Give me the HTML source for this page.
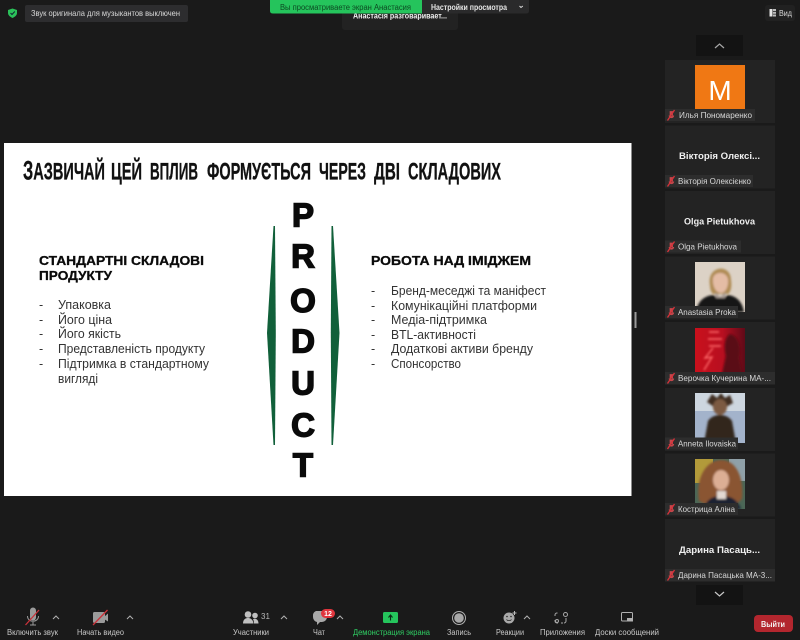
<!DOCTYPE html>
<html><head><meta charset="utf-8"><title>Zoom</title>
<style>
html,body{margin:0;padding:0;background:#1a1a1a;width:800px;height:640px;overflow:hidden}
svg{display:block;font-family:"Liberation Sans",sans-serif}
.l{font-size:8px;fill:#c8c8c8;text-anchor:start}
.n{font-size:8.500px;fill:#d8d8d8}
.b{font-size:9.500px;font-weight:bold;fill:#f0f0f0}
.li{font-size:12.500px;fill:#333}
.h{font-size:13px;font-weight:bold;fill:#0a0a0a;stroke:#0a0a0a;stroke-width:.3}
.p{font-size:33px;font-weight:bold;fill:#0a0a0a;stroke:#0a0a0a;stroke-width:1.500;text-anchor:middle}
.t{font-family:"Liberation Sans Narrow","Liberation Sans",sans-serif;font-size:24px;font-weight:bold;fill:#111;stroke:#111;stroke-width:.35}
.tile{fill:#232323}
.lab{fill:#2d2d2d}
</style></head><body>
<svg width="800" height="640" viewBox="0 0 800 640" xmlns="http://www.w3.org/2000/svg">
<defs>
<filter id="bl"><feGaussianBlur stdDeviation="1"/></filter>
<filter id="bl2"><feGaussianBlur stdDeviation="2.500"/></filter>
<linearGradient id="rd" x1="0" x2="1" y1="0" y2="0"><stop offset="0" stop-color="#c9101c"/><stop offset=".55" stop-color="#b80f20"/><stop offset="1" stop-color="#5f0a18"/></linearGradient>
<g id="mm"><path d="M3 1.500h2.600v5H3zM2 5.500c0 3 4.800 3 4.800 0" fill="#c4484c" stroke="#c4484c" stroke-width=".7"/><path d="M.5 10.500 L7.500 0" stroke="#d6323a" stroke-width="1.300"/></g>
</defs>
<rect width="800" height="640" fill="#1a1a1a"/>

<!-- top left -->
<path d="M12.500 8.500 L17 10 V13 C17 15.500 14.500 17 12.500 18 C10.500 17 8 15.500 8 13 V10Z" fill="#2bc15a"/>
<path d="M10.500 13 L12 14.500 L14.800 11.500" stroke="#123" stroke-width="1" fill="none"/>
<rect x="25" y="5" width="163" height="17" rx="2" fill="#2d2d2f"/>
<text x="31" y="16" class="n" textLength="149" lengthAdjust="spacingAndGlyphs">Звук оригинала для музыкантов выключен</text>

<!-- talking box -->
<rect x="342" y="8" width="116" height="22" rx="3" fill="#222"/>
<text x="353" y="18.500" class="b" style="font-size:8px" textLength="94" lengthAdjust="spacingAndGlyphs">Анастасія разговаривает...</text>

<!-- top banner -->
<path d="M270 0H422V13.500H273Q270 13.500 270 11Z" fill="#25c45c"/>
<text x="280" y="10" style="font-size:8px;fill:#0c4a22" textLength="131" lengthAdjust="spacingAndGlyphs">Вы просматриваете экран Анастасия</text>
<path d="M422 0H529V11Q529 13.500 526 13.500H422Z" fill="#2a2a2b"/>
<text x="431" y="10" style="font-size:8px;font-weight:bold;fill:#e6e6e6" textLength="76" lengthAdjust="spacingAndGlyphs">Настройки просмотра</text>
<path d="M519.500 6L521 7.500L522.800 6" stroke="#ddd" fill="none" stroke-width="1"/>

<!-- view -->
<rect x="765" y="5" width="30" height="16" rx="3" fill="#212121"/>
<rect x="769.500" y="9" width="3" height="7.500" fill="#e4e4e4"/><rect x="773" y="9" width="3" height="2" fill="#bbb"/><rect x="773" y="11.800" width="3" height="2" fill="#bbb"/><rect x="773" y="14.500" width="3" height="2" fill="#bbb"/>
<text x="779" y="16" class="n" textLength="13" lengthAdjust="spacingAndGlyphs">Вид</text>

<!-- slide -->
<rect x="4" y="143" width="627.500" height="353" fill="#fff"/>
<text x="23" y="179.500" class="t" textLength="82" lengthAdjust="spacingAndGlyphs"><tspan style="font-size:27px">З</tspan>АЗВИЧАЙ</text>
<text x="111" y="179.500" class="t" textLength="31" lengthAdjust="spacingAndGlyphs">ЦЕЙ</text>
<text x="150" y="179.500" class="t" textLength="48" lengthAdjust="spacingAndGlyphs">ВПЛИВ</text>
<text x="207" y="179.500" class="t" textLength="104" lengthAdjust="spacingAndGlyphs">ФОРМУЄТЬСЯ</text>
<text x="319" y="179.500" class="t" textLength="47" lengthAdjust="spacingAndGlyphs">ЧЕРЕЗ</text>
<text x="374" y="179.500" class="t" textLength="26" lengthAdjust="spacingAndGlyphs">ДВІ</text>
<text x="408" y="179.500" class="t" textLength="93" lengthAdjust="spacingAndGlyphs">СКЛАДОВИХ</text>

<text x="303" y="226.500" class="p">P</text>
<text x="303" y="267.500" class="p">R</text>
<text x="303" y="312" class="p">O</text>
<text x="303" y="352.500" class="p">D</text>
<text x="303" y="394.500" class="p">U</text>
<text x="303" y="436.500" class="p">C</text>
<text x="303" y="476.500" class="p">T</text>

<path d="M273.500 226H275L275.800 333L275 445H273.500L267 333Z" fill="#11603a"/>
<path d="M331.500 226H333L339.500 333L333 445H331.500L330.800 333Z" fill="#11603a"/>

<text x="39" y="265" class="h" textLength="165" lengthAdjust="spacingAndGlyphs">СТАНДАРТНІ СКЛАДОВІ</text>
<text x="39" y="280" class="h" textLength="73" lengthAdjust="spacingAndGlyphs">ПРОДУКТУ</text>
<text class="li" x="39" y="309">-</text><text class="li" x="58" y="309" textLength="53" lengthAdjust="spacingAndGlyphs">Упаковка</text>
<text class="li" x="39" y="324">-</text><text class="li" x="58" y="324" textLength="54" lengthAdjust="spacingAndGlyphs">Його ціна</text>
<text class="li" x="39" y="338">-</text><text class="li" x="58" y="338" textLength="63" lengthAdjust="spacingAndGlyphs">Його якість</text>
<text class="li" x="39" y="353">-</text><text class="li" x="58" y="353" textLength="147" lengthAdjust="spacingAndGlyphs">Представленість продукту</text>
<text class="li" x="39" y="368">-</text><text class="li" x="58" y="368" textLength="151" lengthAdjust="spacingAndGlyphs">Підтримка в стандартному</text>
<text class="li" x="58" y="383" textLength="40" lengthAdjust="spacingAndGlyphs">вигляді</text>

<text x="371" y="265" class="h" textLength="160" lengthAdjust="spacingAndGlyphs">РОБОТА НАД ІМІДЖЕМ</text>
<text class="li" x="371" y="295">-</text><text class="li" x="391" y="295" textLength="155" lengthAdjust="spacingAndGlyphs">Бренд-меседжі та маніфест</text>
<text class="li" x="371" y="310">-</text><text class="li" x="391" y="310" textLength="146" lengthAdjust="spacingAndGlyphs">Комунікаційні платформи</text>
<text class="li" x="371" y="324">-</text><text class="li" x="391" y="324" textLength="96" lengthAdjust="spacingAndGlyphs">Медіа-підтримка</text>
<text class="li" x="371" y="339">-</text><text class="li" x="391" y="339" textLength="85" lengthAdjust="spacingAndGlyphs">BTL-активності</text>
<text class="li" x="371" y="353">-</text><text class="li" x="391" y="353" textLength="142" lengthAdjust="spacingAndGlyphs">Додаткові активи бренду</text>
<text class="li" x="371" y="368">-</text><text class="li" x="391" y="368" textLength="70" lengthAdjust="spacingAndGlyphs">Спонсорство</text>

<!-- splitter -->
<rect x="634.500" y="312" width="2" height="16" fill="#9a9a9a"/>

<!-- side nav -->
<rect x="696" y="35" width="47" height="21" fill="#131313"/>
<path d="M715 48L719.500 44L724 48" stroke="#a8a8a8" fill="none" stroke-width="1.200"/>
<rect x="696" y="585" width="47" height="20" fill="#131313"/>
<path d="M715 592L719.500 596L724 592" stroke="#c8c8c8" fill="none" stroke-width="1.200"/>

<!-- tiles -->
<rect class="tile" x="665" y="60" width="110" height="63"/>
<rect class="tile" x="665" y="125.500" width="110" height="63"/>
<rect class="tile" x="665" y="191" width="110" height="63"/>
<rect class="tile" x="665" y="256.500" width="110" height="63"/>
<rect class="tile" x="665" y="322" width="110" height="63"/>
<rect class="tile" x="665" y="388" width="110" height="63"/>
<rect class="tile" x="665" y="453.500" width="110" height="63"/>
<rect class="tile" x="665" y="519" width="110" height="63"/>

<!-- avatar M -->
<rect x="695" y="65" width="50" height="47" fill="#f07814"/>
<text x="720" y="100" text-anchor="middle" style="font-size:28px;fill:#fff">M</text>

<text x="679" y="159" class="b" textLength="81" lengthAdjust="spacingAndGlyphs">Вікторія Олексі...</text>
<text x="684" y="224.500" class="b" textLength="71" lengthAdjust="spacingAndGlyphs">Olga Pietukhova</text>
<text x="679" y="553" class="b" textLength="81" lengthAdjust="spacingAndGlyphs">Дарина Пасаць...</text>

<!-- Anastasia photo -->
<svg x="695" y="262" width="50" height="50" viewBox="0 0 50 50">
<rect width="50" height="50" fill="#dcd2c6"/>
<g filter="url(#bl)">
<path d="M15 24C11 3 36 1 36 18C37 24 36 30 33 32H18C16 30 15 27 15 24Z" fill="#b08c55"/>
<path d="M18 16C20 9 31 9 33 17C34 25 30 31 26 31C21 31 17 24 18 16Z" fill="#e4bca5"/>
<path d="M1 50C3 38 10 34 18 33C22 36 30 36 33 33C40 34 47 38 49 50Z" fill="#141317"/>
<path d="M20 30L25 35L31 30L30 36H21Z" fill="#a89b94"/>
</g>
</svg>

<!-- Verochka photo -->
<svg x="695" y="328" width="50" height="50" viewBox="0 0 50 50">
<rect width="50" height="50" fill="url(#rd)"/>
<g filter="url(#bl)">
<path d="M35 6C44 8 46 20 44 30L48 50H26L31 28C29 20 29 10 35 6Z" fill="#5a0c18"/>
<path d="M14 4H24M13 11H27M14 18H26M18 20L10 30L17 29L9 42" stroke="#ff6a6a" stroke-width="1.400" fill="none"/>
</g>
</svg>

<!-- Anneta photo -->
<svg x="695" y="393" width="50" height="50" viewBox="0 0 50 50">
<rect width="50" height="50" fill="#a3b3cb"/>
<rect width="50" height="18" fill="#cdd6df"/>
<g filter="url(#bl)">
<path d="M12 9L17 1L22 5L26 0L30 5L35 2L38 10L31 14H19Z" fill="#3f2d20"/>
<ellipse cx="25" cy="14" rx="7" ry="8" fill="#7c5a42"/>
<path d="M9 50L13 28C18 20 32 20 37 28L41 50Z" fill="#33251d"/>
</g>
</svg>

<!-- Kostrytsia photo -->
<svg x="695" y="459" width="50" height="50" viewBox="0 0 50 50">
<rect width="50" height="50" fill="#4b6656"/>
<rect width="18" height="24" fill="#b29a3a"/>
<rect x="34" width="16" height="22" fill="#8fa0a8"/>
<g filter="url(#bl)">
<path d="M4 42C0 18 12 1 26 1C42 1 49 20 47 40L40 46H12Z" fill="#8a5430"/>
<ellipse cx="26" cy="21" rx="8" ry="10" fill="#dcae94"/>
<path d="M8 50C12 40 18 37 26 37C36 37 42 40 46 50Z" fill="#1c2233"/>
<rect x="22" y="32" width="9" height="8" fill="#e3d9d3"/>
</g>
</svg>

<!-- labels -->
<rect class="lab" x="665" y="109" width="90" height="12"/>
<rect class="lab" x="665" y="175" width="88" height="12"/>
<rect class="lab" x="665" y="240.500" width="76" height="12"/>
<rect class="lab" x="665" y="306" width="73" height="12"/>
<rect class="lab" x="665" y="372" width="110" height="12"/>
<rect class="lab" x="665" y="437.500" width="73" height="12"/>
<rect class="lab" x="665" y="503" width="73" height="12"/>
<rect class="lab" x="665" y="569" width="110" height="12"/>

<use href="#mm" x="667" y="110"/><use href="#mm" x="667" y="176"/><use href="#mm" x="667" y="241.500"/><use href="#mm" x="667" y="307"/><use href="#mm" x="667" y="373"/><use href="#mm" x="667" y="438.500"/><use href="#mm" x="667" y="504"/><use href="#mm" x="667" y="570"/>

<text x="679" y="118" class="n" textLength="73" lengthAdjust="spacingAndGlyphs">Илья Пономаренко</text>
<text x="678" y="184" class="n" textLength="73" lengthAdjust="spacingAndGlyphs">Вікторія Олексієнко</text>
<text x="678" y="249.500" class="n" textLength="59" lengthAdjust="spacingAndGlyphs">Olga Pietukhova</text>
<text x="678" y="315" class="n" textLength="58" lengthAdjust="spacingAndGlyphs">Anastasia Proka</text>
<text x="678" y="381" class="n" textLength="93" lengthAdjust="spacingAndGlyphs">Верочка Кучерина МА-...</text>
<text x="678" y="446.500" class="n" textLength="58" lengthAdjust="spacingAndGlyphs">Anneta Ilovaiska</text>
<text x="678" y="512" class="n" textLength="57" lengthAdjust="spacingAndGlyphs">Кострица Аліна</text>
<text x="678" y="578" class="n" textLength="94" lengthAdjust="spacingAndGlyphs">Дарина Пасацька МА-3...</text>

<!-- toolbar icons -->
<!-- mic -->
<path d="M30 610.500a3 3 0 0 1 6 0v7a3 3 0 0 1-6 0z" fill="#9b9b9b"/>
<path d="M27.500 616c0 7 11 7 11 0M33 622v2.500M30 625h6" stroke="#9b9b9b" fill="none" stroke-width="1"/>
<path d="M25.500 625L39 610" stroke="#c9323a" stroke-width="1.300"/>
<path d="M53 619L56 616L59 619" stroke="#b0b0b0" fill="none"/>
<!-- video -->
<rect x="93" y="612" width="12" height="11" rx="1.500" fill="#9b9b9b"/>
<path d="M104 617L108 613.500V621.500L104 619Z" fill="#9b9b9b"/>
<path d="M93 625L107.500 610" stroke="#c9323a" stroke-width="1.300"/>
<path d="M127 619L130 616L133 619" stroke="#b0b0b0" fill="none"/>
<!-- participants -->
<circle cx="248" cy="614.500" r="3.300" fill="#c0c0c0"/><circle cx="255" cy="615.500" r="2.800" fill="#c0c0c0"/>
<path d="M243 623.500c0-4.500 3-5.500 5-5.500s5 1 5.500 5.500zM254 623.500c0-2 -.5-3.500-1-4.500 1.500-.7 5.500-.5 5.500 4.500z" fill="#c0c0c0"/>
<text x="261" y="619" style="font-size:8px;fill:#b8b8b8">31</text>
<path d="M281 619L284 616L287 619" stroke="#b0b0b0" fill="none"/>
<!-- chat -->
<path d="M316 611H322a5 5 0 0 1 5 5v1a5 5 0 0 1-5 5h-2l-3 3v-3a5 5 0 0 1-4-5v-1a5 5 0 0 1 3-5z" fill="#a9a9a9"/>
<rect x="321" y="609" width="14" height="9" rx="4.500" fill="#e0353d"/>
<text x="328" y="616" text-anchor="middle" style="font-size:7px;font-weight:bold;fill:#fff">12</text>
<path d="M337 619L340 616L343 619" stroke="#b0b0b0" fill="none"/>
<!-- share -->
<rect x="383" y="612" width="15" height="11" rx="1.500" fill="#25c45c"/>
<path d="M390.500 620.500V615.500M388.500 617.500L390.500 615L392.500 617.500" stroke="#0c2a16" stroke-width="1.100" fill="none"/>
<!-- record -->
<circle cx="459" cy="618" r="6.500" fill="none" stroke="#b0b0b0"/><circle cx="459" cy="618" r="4.800" fill="#a8a8a8"/>
<!-- reactions -->
<circle cx="509" cy="618" r="5.500" fill="#a9a9a9"/>
<circle cx="507" cy="616.500" r=".8" fill="#222"/><circle cx="511" cy="616.500" r=".8" fill="#222"/><path d="M506.500 619.500c1 1.500 4 1.500 5 0" stroke="#222" fill="none" stroke-width=".7"/>
<path d="M514.500 611v4M512.500 613h4" stroke="#bbb" fill="none"/>
<path d="M524 619L527 616L530 619" stroke="#b0b0b0" fill="none"/>
<!-- apps -->
<path d="M557.500 613h-.5a2 2 0 0 0-2 2v1M555 620v1a2 2 0 0 0 2 2h1M561 623h2" stroke="#a8a8a8" fill="none" stroke-width="1"/>
<circle cx="565.500" cy="614.500" r="2" stroke="#a8a8a8" fill="none"/>
<circle cx="557" cy="621" r="1.500" stroke="#a8a8a8" fill="none"/>
<path d="M566 618v3a2 2 0 0 1-2 2" stroke="#a8a8a8" fill="none"/>
<!-- whiteboards -->
<rect x="621.500" y="612.500" width="11" height="8.500" rx="1" fill="none" stroke="#b0b0b0"/>
<rect x="627" y="618" width="6" height="3.500" fill="#b0b0b0"/>

<!-- toolbar labels -->
<text x="7" y="635" class="l" textLength="51" lengthAdjust="spacingAndGlyphs">Включить звук</text>
<text x="77" y="635" class="l" textLength="47" lengthAdjust="spacingAndGlyphs">Начать видео</text>
<text x="233" y="635" class="l" textLength="36" lengthAdjust="spacingAndGlyphs">Участники</text>
<text x="313" y="635" class="l" textLength="12" lengthAdjust="spacingAndGlyphs">Чат</text>
<text x="353" y="635" class="l" style="fill:#2fce63" textLength="77" lengthAdjust="spacingAndGlyphs">Демонстрация экрана</text>
<text x="447" y="635" class="l" textLength="24" lengthAdjust="spacingAndGlyphs">Запись</text>
<text x="496" y="635" class="l" textLength="28" lengthAdjust="spacingAndGlyphs">Реакции</text>
<text x="540" y="635" class="l" textLength="45" lengthAdjust="spacingAndGlyphs">Приложения</text>
<text x="595" y="635" class="l" textLength="64" lengthAdjust="spacingAndGlyphs">Доски сообщений</text>

<!-- leave -->
<rect x="754" y="615" width="39" height="17" rx="4" fill="#b3262e"/>
<text x="761" y="627" style="font-size:8.500px;font-weight:bold;fill:#f4f4f4" textLength="24" lengthAdjust="spacingAndGlyphs">Выйти</text>
</svg>
</body></html>
